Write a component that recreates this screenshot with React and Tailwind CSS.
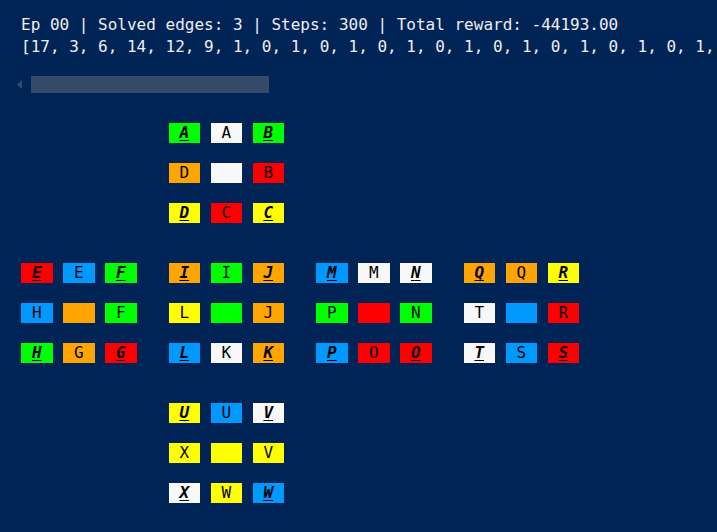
const C = {
  g: 'bg-[#00ff00]',
  w: 'bg-[#f8f8f8]',
  o: 'bg-[#ffa500]',
  r: 'bg-[#ff0000]',
  y: 'bg-[#ffff00]',
  b: 'bg-[#0099ff]',
};

// each cell: [colour, label, isCornerOrEdgeId]
const faces = {
  up: [
    [['g', 'A', 1], ['w', 'A'], ['g', 'B', 1]],
    [['o', 'D'], ['w', ''], ['r', 'B']],
    [['y', 'D', 1], ['r', 'C'], ['y', 'C', 1]],
  ],
  left: [
    [['r', 'E', 1], ['b', 'E'], ['g', 'F', 1]],
    [['b', 'H'], ['o', ''], ['g', 'F']],
    [['g', 'H', 1], ['o', 'G'], ['r', 'G', 1]],
  ],
  front: [
    [['o', 'I', 1], ['g', 'I'], ['o', 'J', 1]],
    [['y', 'L'], ['g', ''], ['o', 'J']],
    [['b', 'L', 1], ['w', 'K'], ['o', 'K', 1]],
  ],
  right: [
    [['b', 'M', 1], ['w', 'M'], ['w', 'N', 1]],
    [['g', 'P'], ['r', ''], ['g', 'N']],
    [['b', 'P', 1], ['r', 'O'], ['r', 'O', 1]],
  ],
  back: [
    [['o', 'Q', 1], ['o', 'Q'], ['y', 'R', 1]],
    [['w', 'T'], ['b', ''], ['r', 'R']],
    [['w', 'T', 1], ['b', 'S'], ['r', 'S', 1]],
  ],
  down: [
    [['y', 'U', 1], ['b', 'U'], ['w', 'V', 1]],
    [['y', 'X'], ['y', ''], ['y', 'V']],
    [['w', 'X', 1], ['y', 'W'], ['b', 'W', 1]],
  ],
};

function Cell({ cell }) {
  const [col, label, id] = cell;
  return (
    <div
      className={`w-[31.5px] h-5 flex items-center justify-center text-[16px] leading-none text-black ${C[col]} ${
        id ? 'font-bold italic underline underline-offset-2' : ''
      }`}
    >
      {label}
    </div>
  );
}

function Face({ rows }) {
  return (
    <div className="flex flex-col gap-5">
      {rows.map((row, i) => (
        <div key={i} className="flex gap-[10.5px]">
          {row.map((cell, j) => (
            <Cell key={j} cell={cell} />
          ))}
        </div>
      ))}
    </div>
  );
}

export default function App() {
  const state = [17, 3, 6, 14, 12, 9];
  for (let i = 0; i < 40; i++) state.push(i % 2 === 0 ? 1 : 0);

  return (
    <div
      className="min-h-screen w-[717px] h-[532px] overflow-hidden bg-[#012456] text-[#eeedf0]"
      style={{ fontFamily: '"DejaVu Sans Mono", "Liberation Mono", monospace' }}
    >
      {/* Log output */}
      <div className="pl-[21px] pt-[14px] text-[16px] leading-[22px] whitespace-pre overflow-hidden">
        <div>Ep 00 | Solved edges: 3 | Steps: 300 | Total reward: -44193.00</div>
        <div>[{state.join(', ')}]</div>
      </div>

      {/* Horizontal scrollbar */}
      <div className="flex items-center h-[17px] mt-[18px] pl-[17px] gap-[9px]">
        <svg width="5" height="9" viewBox="0 0 5 9">
          <path d="M5 0 L0 4.5 L5 9 Z" fill="#2d4d73" />
        </svg>
        <div className="w-[238px] h-[17px] bg-[#344a66]" />
      </div>

      {/* Cube net */}
      <div className="mt-[30px] pl-[21px] flex flex-col gap-10">
        <div className="pl-[147.5px]">
          <Face rows={faces.up} />
        </div>
        <div className="flex gap-[32px]">
          <Face rows={faces.left} />
          <Face rows={faces.front} />
          <Face rows={faces.right} />
          <Face rows={faces.back} />
        </div>
        <div className="pl-[147.5px]">
          <Face rows={faces.down} />
        </div>
      </div>
    </div>
  );
}
